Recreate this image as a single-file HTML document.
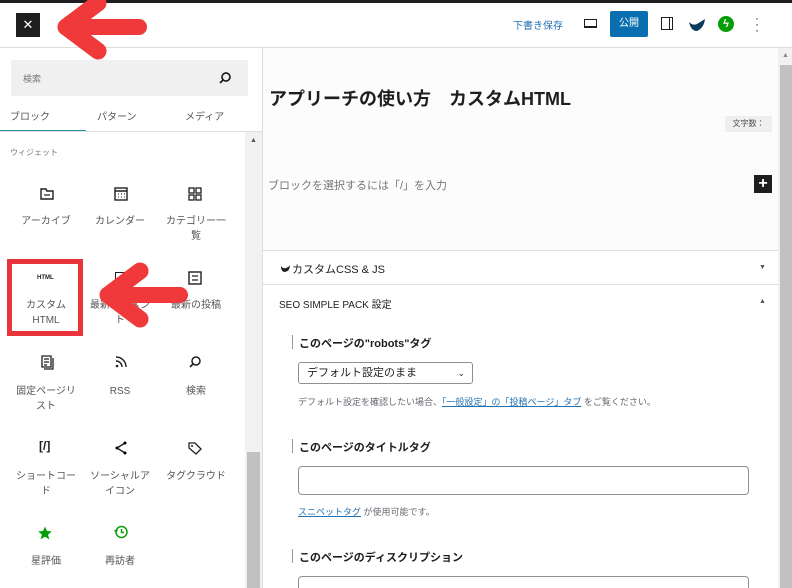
<!DOCTYPE html>
<html><head><meta charset="utf-8"><style>
*{box-sizing:border-box;margin:0;padding:0}
html,body{width:792px;height:588px;overflow:hidden}
body{background:#fff;font-family:"Liberation Sans","Noto Sans CJK JP",sans-serif;position:relative;color:#1e1e1e}
.abs{position:absolute}
.t{font-size:10px;color:#555;text-align:center;line-height:15px}
.ic{position:absolute;width:16px;height:16px}
</style></head><body>
<div class="abs" style="left:0;top:0;width:792px;height:3px;background:#1e1e1e"></div>
<div class="abs" style="left:0;top:47px;width:792px;height:1px;background:#ddd"></div>
<!-- header -->
<div class="abs" style="left:16px;top:13px;width:24px;height:24px;background:#1e1e1e;color:#fff;font-size:13px;text-align:center;line-height:24px">✕</div>
<div class="abs" style="left:513px;top:17px;font-size:10px;color:#2271b1">下書き保存</div>
<div class="abs" style="left:584px;top:19px;width:13px;height:9px;border:1.5px solid #1e1e1e;border-bottom-width:2px"></div>
<div class="abs" style="left:610px;top:11px;width:38px;height:26px;background:#0a6fb0;color:#fff;font-size:10px;text-align:center;line-height:26px;border-radius:2px">公開</div>
<div class="abs" style="left:661px;top:17px;width:12px;height:13px;border:1.5px solid #1e1e1e"><div style="position:absolute;right:2px;top:0;width:1.5px;height:100%;background:#1e1e1e"></div></div>
<svg class="abs" style="left:687px;top:14px" width="20" height="20" viewBox="0 0 20 20"><path d="M2 8 Q6 12 10 10 Q15 7 18 5 Q17 14 10 17 Q4 17 2 8Z" fill="#0b3a5c"/></svg>
<div class="abs" style="left:718px;top:16px;width:16px;height:16px;border-radius:50%;background:#069e08;color:#fff;font-size:11px;text-align:center;line-height:16px;font-weight:bold">ϟ</div>
<div class="abs" style="left:755px;top:15px;font-size:12px;line-height:6px;color:#1e1e1e;width:4px">·<br>·<br>·</div>
<!-- left panel -->
<div class="abs" style="left:262px;top:48px;width:1px;height:540px;background:#ddd"></div>
<div class="abs" style="left:11px;top:60px;width:237px;height:36px;background:#f0f0f0"></div>
<div class="abs" style="left:23px;top:72px;font-size:9px;color:#757575">検索</div>
<svg class="abs" style="left:218px;top:71px" width="14" height="14" viewBox="0 0 14 14"><circle cx="8" cy="6" r="4" fill="none" stroke="#1e1e1e" stroke-width="1.7"/><path d="M5 9 L2 12" stroke="#1e1e1e" stroke-width="1.8"/></svg>
<div class="abs" style="left:10px;top:108px;font-size:10px;color:#555">ブロック</div>
<div class="abs" style="left:97px;top:108px;font-size:10px;color:#555">パターン</div>
<div class="abs" style="left:185px;top:108px;font-size:10px;color:#555">メディア</div>
<div class="abs" style="left:0;top:130px;width:86px;height:2px;background:#2c8a9e"></div>
<div class="abs" style="left:0;top:131px;width:262px;height:1px;background:#e0e0e0"></div>
<div class="abs" style="left:245px;top:132px;width:17px;height:456px;background:#f1f1f1"></div>
<div class="abs" style="left:247px;top:452px;width:13px;height:136px;background:#c1c1c1"></div>
<div class="abs" style="left:250px;top:137px;font-size:7px;color:#555">▲</div>
<div class="abs" style="left:10px;top:147px;font-size:8px;color:#757575">ウィジェット</div>
<!-- grid -->
<svg class="ic" style="left:39px;top:186px" viewBox="0 0 16 16"><path d="M2 3h5l1 2h6v8H2z" fill="none" stroke="#1e1e1e" stroke-width="1.4"/><path d="M5 9h6" stroke="#1e1e1e" stroke-width="1.2"/></svg>
<div class="t abs" style="left:10px;top:214px;width:72px">アーカイブ</div>
<svg class="ic" style="left:113px;top:186px" viewBox="0 0 16 16"><rect x="2" y="2" width="12" height="12" fill="none" stroke="#1e1e1e" stroke-width="1.4"/><path d="M2 5h12" stroke="#1e1e1e" stroke-width="1.5"/><path d="M5 8h1M8 8h1M11 8h1M5 11h1M8 11h1M11 11h1" stroke="#1e1e1e"/></svg>
<div class="t abs" style="left:84px;top:214px;width:72px">カレンダー</div>
<svg class="ic" style="left:187px;top:186px" viewBox="0 0 16 16"><rect x="2" y="2" width="5" height="5" fill="none" stroke="#1e1e1e" stroke-width="1.3"/><rect x="9" y="2" width="5" height="5" fill="none" stroke="#1e1e1e" stroke-width="1.3"/><rect x="2" y="9" width="5" height="5" fill="none" stroke="#1e1e1e" stroke-width="1.3"/><rect x="9" y="9" width="5" height="5" fill="none" stroke="#1e1e1e" stroke-width="1.3"/></svg>
<div class="t abs" style="left:158px;top:214px;width:76px">カテゴリー一<br>覧</div>
<div class="abs" style="left:7px;top:259px;width:76px;height:77px;border:5px solid #e8343a"></div>
<div class="abs" style="left:37px;top:275px;font-size:6px;font-weight:bold">HTML</div>
<div class="t abs" style="left:10px;top:298px;width:72px">カスタム<br>HTML</div>
<div class="abs" style="left:115px;top:272px;width:14px;height:14px;border:1.5px solid #1e1e1e"></div>
<div class="t abs" style="left:84px;top:298px;width:72px">最新のコメン<br>ト</div>
<svg class="ic" style="left:187px;top:270px" viewBox="0 0 16 16"><rect x="2" y="2" width="12" height="12" fill="none" stroke="#1e1e1e" stroke-width="1.4"/><path d="M5 6h6M5 10h6" stroke="#1e1e1e" stroke-width="1.3"/></svg>
<div class="t abs" style="left:158px;top:298px;width:76px">最新の投稿</div>
<svg class="ic" style="left:39px;top:354px" viewBox="0 0 16 16"><path d="M3 2h9v11H3z M5 5h5M5 8h5M5 11h3 M14 4v11H5" fill="none" stroke="#1e1e1e" stroke-width="1.3"/></svg>
<div class="t abs" style="left:10px;top:384px;width:72px">固定ページリ<br>スト</div>
<svg class="ic" style="left:113px;top:354px" viewBox="0 0 16 16"><circle cx="4" cy="12" r="1.3" fill="#1e1e1e"/><path d="M3 7a6 6 0 0 1 6 6M3 3a10 10 0 0 1 10 10" fill="none" stroke="#1e1e1e" stroke-width="1.4"/></svg>
<div class="t abs" style="left:84px;top:384px;width:72px">RSS</div>
<svg class="ic" style="left:187px;top:354px" viewBox="0 0 16 16"><circle cx="9" cy="7" r="4" fill="none" stroke="#1e1e1e" stroke-width="1.5"/><path d="M6 10l-3 3" stroke="#1e1e1e" stroke-width="1.6"/></svg>
<div class="t abs" style="left:158px;top:384px;width:76px">検索</div>
<div class="abs" style="left:39px;top:439px;font-size:12px;font-weight:bold">[/]</div>
<div class="t abs" style="left:10px;top:469px;width:72px">ショートコー<br>ド</div>
<svg class="ic" style="left:113px;top:440px" viewBox="0 0 16 16"><path d="M12 3L4 8l8 5" fill="none" stroke="#1e1e1e" stroke-width="1.5"/><circle cx="12" cy="3" r="1.5"/><circle cx="4" cy="8" r="1.5"/><circle cx="12" cy="13" r="1.5"/></svg>
<div class="t abs" style="left:84px;top:469px;width:72px">ソーシャルア<br>イコン</div>
<svg class="ic" style="left:187px;top:440px" viewBox="0 0 16 16"><path d="M2 3v5l7 6 5-5-6-6z" fill="none" stroke="#1e1e1e" stroke-width="1.3"/><circle cx="5" cy="6" r="1" fill="#1e1e1e"/></svg>
<div class="t abs" style="left:158px;top:469px;width:76px">タグクラウド</div>
<svg class="ic" style="left:37px;top:525px" viewBox="0 0 16 16"><path d="M8 1.5l2 4.5 4.8.4-3.7 3.2 1.2 4.8L8 11.8 3.7 14.4l1.2-4.8L1.2 6.4 6 6z" fill="#069e08"/></svg>
<svg class="ic" style="left:113px;top:524px" viewBox="0 0 16 16"><circle cx="8.5" cy="8" r="5.5" fill="none" stroke="#069e08" stroke-width="1.5"/><path d="M8.5 5v3.5h2.5" fill="none" stroke="#069e08" stroke-width="1.4"/><path d="M1 6l2 3 2-3" fill="#069e08"/></svg>
<div class="t abs" style="left:10px;top:554px;width:72px">星評価</div>
<div class="t abs" style="left:84px;top:554px;width:72px">再訪者</div>
<!-- editor -->
<div class="abs" style="left:263px;top:48px;width:515px;height:202px;background:#fcfcfc"></div>
<div class="abs" style="left:778px;top:48px;width:14px;height:540px;background:#f1f1f1"></div>
<div class="abs" style="left:780px;top:65px;width:12px;height:523px;background:#c1c1c1"></div>
<div class="abs" style="left:782px;top:52px;font-size:7px;color:#888">▲</div>
<div class="abs" style="left:269px;top:85px;font-size:18px;font-weight:bold;color:#1e1e1e">アプリーチの使い方　カスタムHTML</div>
<div class="abs" style="left:725px;top:116px;width:47px;height:16px;background:#efefef;font-size:8px;color:#555;text-align:center;line-height:16px">文字数：</div>
<div class="abs" style="left:268px;top:177px;font-size:11px;color:#757575">ブロックを選択するには「/」を入力</div>
<div class="abs" style="left:754px;top:175px;width:18px;height:18px;background:#1e1e1e;color:#fff;font-size:16px;font-weight:bold;text-align:center;line-height:18px">+</div>
<div class="abs" style="left:263px;top:250px;width:515px;height:1px;background:#ddd"></div>
<svg class="abs" style="left:280px;top:263px" width="11" height="10" viewBox="0 0 11 10"><path d="M1 3 Q3 6 6 5 Q9 4 10 2 Q10 8 5 9 Q1 9 1 3Z" fill="#1e1e1e"/></svg>
<div class="abs" style="left:292px;top:261px;font-size:11px;color:#1e1e1e">カスタムCSS &amp; JS</div>
<div class="abs" style="left:759px;top:264px;font-size:7px;color:#555">▼</div>
<div class="abs" style="left:263px;top:284px;width:515px;height:1px;background:#ddd"></div>
<div class="abs" style="left:279px;top:296px;font-size:10px;color:#1e1e1e">SEO SIMPLE PACK 設定</div>
<div class="abs" style="left:759px;top:298px;font-size:7px;color:#555">▲</div>
<div class="abs" style="left:292px;top:335px;width:1px;height:14px;background:#999"></div>
<div class="abs" style="left:299px;top:335px;font-size:11px;font-weight:bold;color:#1e1e1e">このページの"robots"タグ</div>
<div class="abs" style="left:298px;top:362px;width:175px;height:22px;border:1px solid #8c8f94;border-radius:3px;font-size:11px;line-height:20px;padding-left:8px">デフォルト設定のまま<span style="position:absolute;right:7px;top:0;font-size:9px">⌄</span></div>
<div class="abs" style="left:298px;top:395px;font-size:9px;color:#646970">デフォルト設定を確認したい場合、<span style="color:#2271b1;text-decoration:underline">「一般設定」の「投稿ページ」タブ</span> をご覧ください。</div>
<div class="abs" style="left:292px;top:439px;width:1px;height:14px;background:#999"></div>
<div class="abs" style="left:299px;top:439px;font-size:11px;font-weight:bold;color:#1e1e1e">このページのタイトルタグ</div>
<div class="abs" style="left:298px;top:466px;width:451px;height:29px;border:1px solid #8c8f94;border-radius:4px"></div>
<div class="abs" style="left:298px;top:505px;font-size:9px;color:#646970"><span style="color:#2271b1;text-decoration:underline">スニペットタグ</span> が使用可能です。</div>
<div class="abs" style="left:292px;top:549px;width:1px;height:14px;background:#999"></div>
<div class="abs" style="left:299px;top:549px;font-size:11px;font-weight:bold;color:#1e1e1e">このページのディスクリプション</div>
<div class="abs" style="left:298px;top:576px;width:451px;height:12px;border:1px solid #8c8f94;border-bottom:none;border-radius:4px 4px 0 0"></div>
<!-- red arrows -->
<svg class="abs" style="left:0;top:0" width="792" height="588" viewBox="0 0 792 588">
<g stroke="#f0393a" stroke-linecap="round" stroke-linejoin="round" fill="#f0393a">
<path d="M66 27 L139 27" stroke-width="16"/>
<path d="M66 27 L98 3 M66 27 L98 51" stroke-width="17" fill="none"/>
<path d="M108 295 L180 295" stroke-width="16"/>
<path d="M108 295 L140 271 M108 295 L140 319" stroke-width="17" fill="none"/>
</g></svg>
</body></html>
